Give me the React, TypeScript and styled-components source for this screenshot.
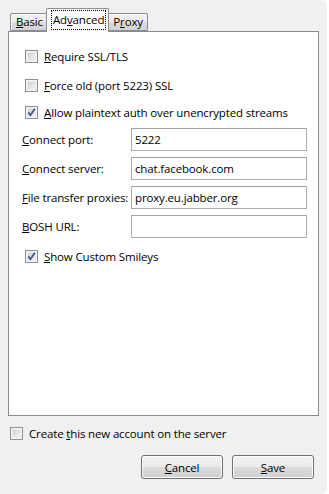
import React from "react";
import styled, { createGlobalStyle } from "styled-components";

const GlobalStyle = createGlobalStyle`
  html, body {
    margin: 0;
    padding: 0;
    background: #ffffff;
  }
  body {
    font-family: "Open Sans", "Noto Sans", Arial, sans-serif;
    font-size: 11.5px;
    letter-spacing: -0.15px;
    color: #000;
  }
`;

const fields = [
  { label: "Connect port:", key: "C", rest: "onnect port:", value: "5222" },
  { label: "Connect server:", key: "C", rest: "onnect server:", value: "chat.facebook.com" },
  { label: "File transfer proxies:", key: "F", rest: "ile transfer proxies:", value: "proxy.eu.jabber.org" },
  { label: "BOSH URL:", key: "B", rest: "OSH URL:", value: "" },
];

const CheckBox = ({ checked }: { checked?: boolean }) => (
  <Box>
    {checked && (
      <svg width="11" height="11" viewBox="0 0 11 11">
        <path
          d="M2.2 5.4 L4.4 8.2 L8.8 1.8"
          fill="none"
          stroke="#4b5f96"
          strokeWidth="2"
          strokeLinejoin="round"
        />
      </svg>
    )}
  </Box>
);

export default function App() {
  return (
    <Window>
      <GlobalStyle />
      <TabStrip>
        <Tab>
          <u>B</u>asic
        </Tab>
        <Tab $active>
          <FocusLabel>
            Ad<u>v</u>anced
          </FocusLabel>
        </Tab>
        <Tab>
          P<u>r</u>oxy
        </Tab>
      </TabStrip>

      <Panel>
        <CheckRow $top={0}>
          <CheckBox />
          <span>
            <u>R</u>equire SSL/TLS
          </span>
        </CheckRow>
        <CheckRow $top={14}>
          <CheckBox />
          <span>
            <u>F</u>orce old (port 5223) SSL
          </span>
        </CheckRow>
        <CheckRow $top={12}>
          <CheckBox checked />
          <span>
            <u>A</u>llow plaintext auth over unencrypted streams
          </span>
        </CheckRow>

        <FormGrid>
          {fields.map((f) => (
            <React.Fragment key={f.label}>
              <FieldLabel>
                <u>{f.key}</u>
                {f.rest}
              </FieldLabel>
              <TextInput value={f.value} readOnly />
            </React.Fragment>
          ))}
        </FormGrid>

        <CheckRow $top={11}>
          <CheckBox checked />
          <span>
            <u>S</u>how Custom Smileys
          </span>
        </CheckRow>
      </Panel>

      <BottomRow>
        <CheckBox />
        <span>
          Create <u>t</u>his new account on the server
        </span>
      </BottomRow>

      <ButtonBar>
        <Button>
          <u>C</u>ancel
        </Button>
        <Button>
          <u>S</u>ave
        </Button>
      </ButtonBar>
    </Window>
  );
}

const Window = styled.div`
  width: 327px;
  height: 494px;
  box-sizing: border-box;
  background: #f0f0f0;
  border-radius: 0 6px 6px 0;
  padding: 8px 13px 0 8px;
  display: flex;
  flex-direction: column;
`;

const TabStrip = styled.div`
  display: flex;
  align-items: flex-end;
  height: 23px;
  padding-left: 2px;
  position: relative;
  z-index: 1;
`;

const Tab = styled.div<{ $active?: boolean }>`
  box-sizing: border-box;
  height: ${({ $active }) => ($active ? "24px" : "18px")};
  margin: ${({ $active }) => ($active ? "0 -2px -1px -2px" : "0")};
  padding: ${({ $active }) => ($active ? "2px 3px 0 5px" : "0 4px 0 5px")};
  border: 1px solid #898c95;
  border-bottom: ${({ $active }) => ($active ? "none" : "1px solid #898c95")};
  border-radius: 2px 2px 0 0;
  background: ${({ $active }) =>
    $active
      ? "#ffffff"
      : "linear-gradient(#f2f2f2, #ebebeb 50%, #dddddd 50%, #d3d3d3)"};
  box-shadow: ${({ $active }) => ($active ? "none" : "inset 1px 1px 0 #fafafa")};
  position: relative;
  z-index: ${({ $active }) => ($active ? 2 : 1)};
  line-height: 16px;
  white-space: nowrap;
`;

const FocusLabel = styled.span`
  display: inline-block;
  outline: 1px dotted #000;
  padding: 0 1px;
  line-height: 18px;
`;

const Panel = styled.div`
  box-sizing: border-box;
  width: 311px;
  height: 385px;
  background: #ffffff;
  border: 1px solid #898c95;
  padding: 17px 11px 0 13px;
  display: flex;
  flex-direction: column;
`;

const CheckRow = styled.label<{ $top: number }>`
  display: flex;
  align-items: center;
  gap: 6px;
  height: 15px;
  margin: ${({ $top }) => $top}px 0 0 3px;
  white-space: nowrap;
`;

const Box = styled.span`
  position: relative;
  box-sizing: border-box;
  width: 13px;
  height: 13px;
  flex: none;
  border: 1px solid #8e8f8f;
  background: #f4f4f4;
  display: flex;
  align-items: center;
  justify-content: center;

  &::before {
    content: "";
    position: absolute;
    inset: 1px;
    background: linear-gradient(135deg, #cbcfd5, #f7f7f7);
    border: 1px solid #e9e9e9;
    box-sizing: border-box;
  }

  svg {
    position: relative;
    z-index: 1;
  }
`;

const FormGrid = styled.div`
  display: grid;
  grid-template-columns: 109px 176px;
  grid-auto-rows: 23px;
  row-gap: 6px;
  align-items: center;
  margin-top: 8px;
`;

const FieldLabel = styled.span`
  white-space: nowrap;
`;

const TextInput = styled.input`
  box-sizing: border-box;
  width: 176px;
  height: 23px;
  margin: 0;
  padding: 0 3px;
  border: 1px solid #abadb3;
  border-top-color: #a0a3aa;
  background: #fff;
  font: inherit;
  letter-spacing: inherit;
  color: #000;
  outline: none;
`;

const BottomRow = styled.label`
  display: flex;
  align-items: center;
  gap: 6px;
  height: 15px;
  margin: 10px 0 0 2px;
  white-space: nowrap;
`;

const ButtonBar = styled.div`
  display: flex;
  justify-content: flex-end;
  gap: 9px;
  margin-top: 14px;
`;

const Button = styled.button`
  box-sizing: border-box;
  width: 82px;
  height: 24px;
  border: 1px solid #707070;
  border-radius: 3px;
  background: linear-gradient(#f2f2f2, #ebebeb 50%, #dddddd 50%, #cfcfcf);
  box-shadow: inset 0 0 0 1px #fcfcfc;
  font: inherit;
  letter-spacing: inherit;
  color: #000;
  padding: 0;
`;
